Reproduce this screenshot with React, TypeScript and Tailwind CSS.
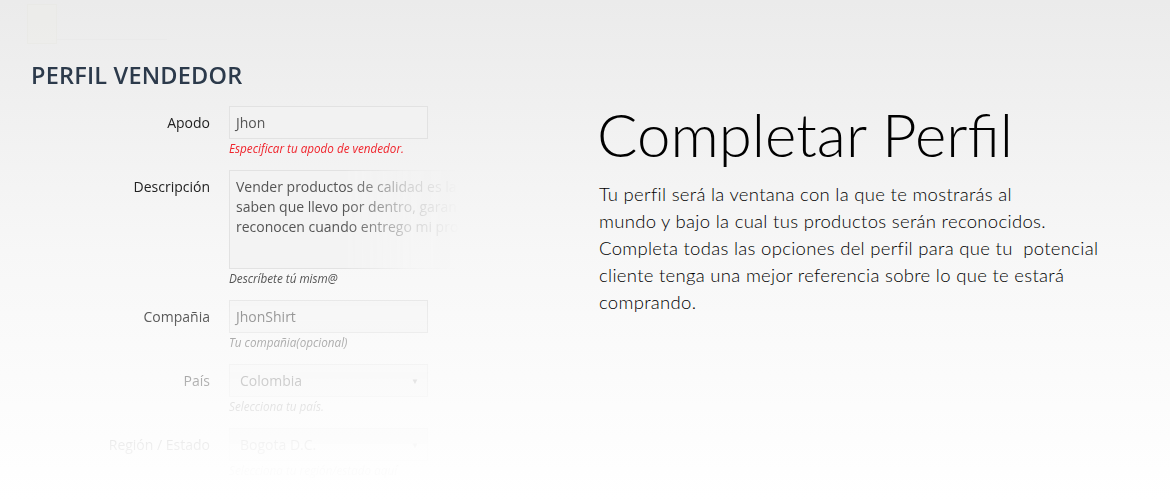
import React from "react";

const labelCls = "h-[33px] flex items-center justify-end text-[14px] text-[#222]";
const helpCls = "mt-[1px] text-[11.7px] leading-[16px] italic";

function Field({
  label,
  help,
  helpColor = "text-[#555]",
  children,
}: {
  label: string;
  help: string;
  helpColor?: string;
  children: React.ReactNode;
}) {
  return (
    <div className="grid grid-cols-[179px_1fr] gap-x-[19px] mb-[14px]">
      <label className={labelCls}>{label}</label>
      <div>
        {children}
        <p className={`${helpCls} ${helpColor}`}>{help}</p>
      </div>
    </div>
  );
}

export default function App() {
  return (
    <div className="h-[500px] w-[1170px] overflow-hidden bg-gradient-to-b from-[#ebebeb] via-[#f7f7f7] to-[#ffffff] flex">
      {/* Left: seller profile form, fading out */}
      <div className="w-[560px] shrink-0 relative font-['Open_Sans',sans-serif] [mask-image:linear-gradient(to_bottom,#000_0px,#000_285px,rgba(0,0,0,0.75)_316px,rgba(0,0,0,0.35)_381px,rgba(0,0,0,0.07)_444px,transparent_490px)]">
        {/* faint top bar */}
        <div className="ml-[27px] mt-[4px] flex items-end opacity-20">
          <div className="w-[30px] h-[40px] border border-[#e0e0d0] bg-[#eeeee6]" />
          <div className="w-[110px] h-px bg-[#e0e0e0] mb-[4px]" />
        </div>

        <h1 className="pl-[31px] mt-[16px] text-[23.5px] leading-[30px] font-semibold tracking-[0.2px] text-[#2c3a4b]">
          PERFIL VENDEDOR
        </h1>

        <div className="mt-[16px] pl-[31px]">
          <Field label="Apodo" help="Especificar tu apodo de vendedor." helpColor="text-[#f0242c]">
            <div className="w-[199px] h-[33px] border border-[#e2e2e2] bg-[#f2f2f2] flex items-center pl-[6px] text-[14px] text-[#555]">
              Jhon
            </div>
          </Field>

          <Field label="Descripción" help="Descríbete tú mism@">
            <div className="w-[230px] h-[99px] border-t border-l border-b border-[#e2e2e2] bg-[#f3f3f3] pl-[6px] pt-[6px] text-[14px] leading-[20px] text-[#555] overflow-hidden whitespace-nowrap [mask-image:linear-gradient(to_right,#000_0px,#000_115px,rgba(0,0,0,0.6)_150px,rgba(0,0,0,0.22)_180px,rgba(0,0,0,0.08)_212px,transparent_230px)]">
              <div>Vender productos de calidad es la</div>
              <div>saben que llevo por dentro, garan</div>
              <div>reconocen cuando entrego mi pro</div>
            </div>
          </Field>

          <Field label="Compañia" help="Tu compañia(opcional)" helpColor="text-[#777]">
            <div className="w-[199px] h-[33px] border border-[#e6e6e6] bg-[#f6f6f6] flex items-center pl-[6px] text-[14px] text-[#777]">
              JhonShirt
            </div>
          </Field>

          <Field label="País" help="Selecciona tu país." helpColor="text-[#999]">
            <div className="w-[199px] h-[33px] border border-[#ececec] bg-[#f8f8f8] flex items-center justify-between pl-[10px] pr-[8px] text-[14px] text-[#777]">
              <span>Colombia</span>
              <span className="text-[8px] text-[#bbb]">▼</span>
            </div>
          </Field>

          <Field label="Región / Estado" help="Selecciona tu región/estado aquí" helpColor="text-[#999]">
            <div className="w-[199px] h-[33px] border border-[#ececec] bg-[#f8f8f8] flex items-center justify-between pl-[10px] pr-[8px] text-[14px] text-[#777]">
              <span>Bogota D.C.</span>
              <span className="text-[8px] text-[#bbb]">▼</span>
            </div>
          </Field>
        </div>
      </div>

      {/* Right: intro copy */}
      <div className="pl-[37px] pt-[96px] font-['Lato',sans-serif] text-[#000]">
        <h2 className="text-[60px] leading-[76px] font-light tracking-[0px]">Completar Perfil</h2>
        <p className="mt-[9px] pl-[2px] text-[18.5px] leading-[27px] font-light tracking-[0.3px]">
          <span className="block">Tu perfil será la ventana con la que te mostrarás al</span>
          <span className="block">mundo y bajo la cual tus productos serán reconocidos.</span>
          <span className="block">Completa todas las opciones del perfil para que tu&nbsp; potencial</span>
          <span className="block">cliente tenga una mejor referencia sobre lo que te estará</span>
          <span className="block">comprando.</span>
        </p>
      </div>
    </div>
  );
}
